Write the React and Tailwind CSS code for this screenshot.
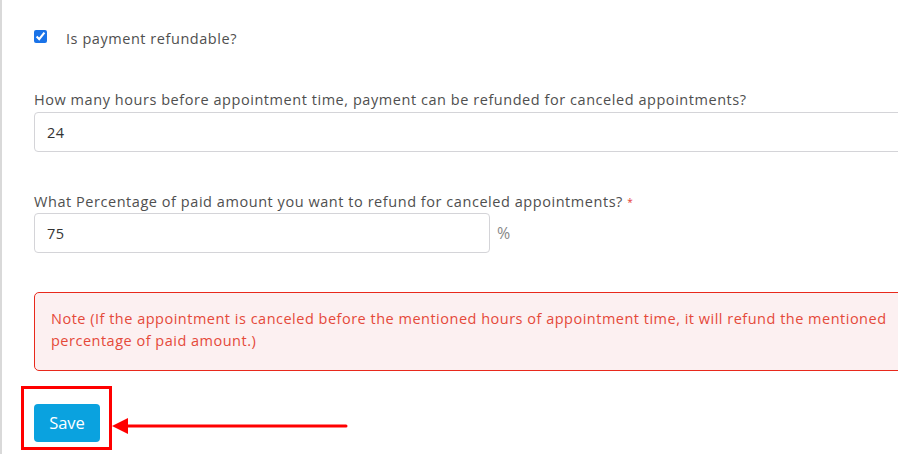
import React, { useState } from 'react'

const font = { fontFamily: '"Open Sans", "Liberation Sans", sans-serif' }

export default function App(){
  const [refundable, setRefundable] = useState(true)
  const [hours, setHours] = useState('24')
  const [percent, setPercent] = useState('75')

  return (
    <div className="h-[454px] w-[898px] overflow-hidden border-l-2 border-[#d9d9d9] bg-white text-[#555]" style={font}>
      <div className="w-[940px] pl-8 pt-[30px]">
        <label className="flex items-start gap-[19px] text-[14.5px] font-medium leading-[20px] tracking-[0.55px] text-[#4f4f4f]">
          <input
            type="checkbox"
            checked={refundable}
            onChange={(e) => setRefundable(e.target.checked)}
            className="mt-0 h-[13px] w-[13px] accent-[#1a73e8]"
          />
          <span className="-mt-[1px]">Is payment refundable?</span>
        </label>

        <div className="mt-[41px]">
          <div className="text-[14.5px] font-medium leading-[20px] tracking-[0.55px] text-[#4f4f4f]">How many hours before appointment time, payment can be refunded for canceled appointments?</div>
          <input
            value={hours}
            onChange={(e) => setHours(e.target.value)}
            className="mt-[2px] h-[40px] w-full rounded-[4px] border border-[#d4d4d8] px-[12px] text-[14.5px] tracking-[0.5px] text-[#333] outline-none"
          />
        </div>

        <div className="mt-[40px]">
          <div className="text-[14.5px] font-medium leading-[20px] tracking-[0.55px] text-[#4f4f4f]">
            What Percentage of paid amount you want to refund for canceled appointments? <span className="align-top text-[10px] text-[#e53935]">*</span>
          </div>
          <div className="mt-[1px] flex items-center gap-[7px]">
            <input
              value={percent}
              onChange={(e) => setPercent(e.target.value)}
              className="h-[40px] w-[456px] rounded-[4px] border border-[#d4d4d8] px-[12px] text-[14.5px] tracking-[0.5px] text-[#333] outline-none"
            />
            <span className="text-[16px] text-[#888]">%</span>
          </div>
        </div>

        <div className="mt-[39px] rounded-[5px] border border-[#e8291c] bg-[#fcf0f1] pb-[18px] pl-[16px] pt-[15px] text-[14.5px] font-medium leading-[22px] tracking-[0.5px] text-[#e5493a]">
          <p className="w-[850px]">Note (If the appointment is canceled before the mentioned hours of appointment time, it will refund the mentioned percentage of paid amount.)</p>
        </div>

        <div className="mt-[15px] flex items-start">
          <div className="-ml-[13px] border-[3px] border-[#ff0000] pb-[5px] pl-[10px] pr-[9px] pt-[15px]">
            <button className="h-[38px] w-[66px] rounded-[4px] bg-[#0aa2df] text-[16.5px] text-white">Save</button>
          </div>
          <svg width="240" height="20" viewBox="0 0 240 20" className="-ml-[1px] mt-[30px]">
            <path d="M1 10 L17 2 L17 18 Z" fill="#ff0000" />
            <line x1="16" y1="10" x2="235" y2="10" stroke="#ff0000" strokeWidth="3" strokeLinecap="round" />
          </svg>
        </div>
      </div>
    </div>
  )
}
